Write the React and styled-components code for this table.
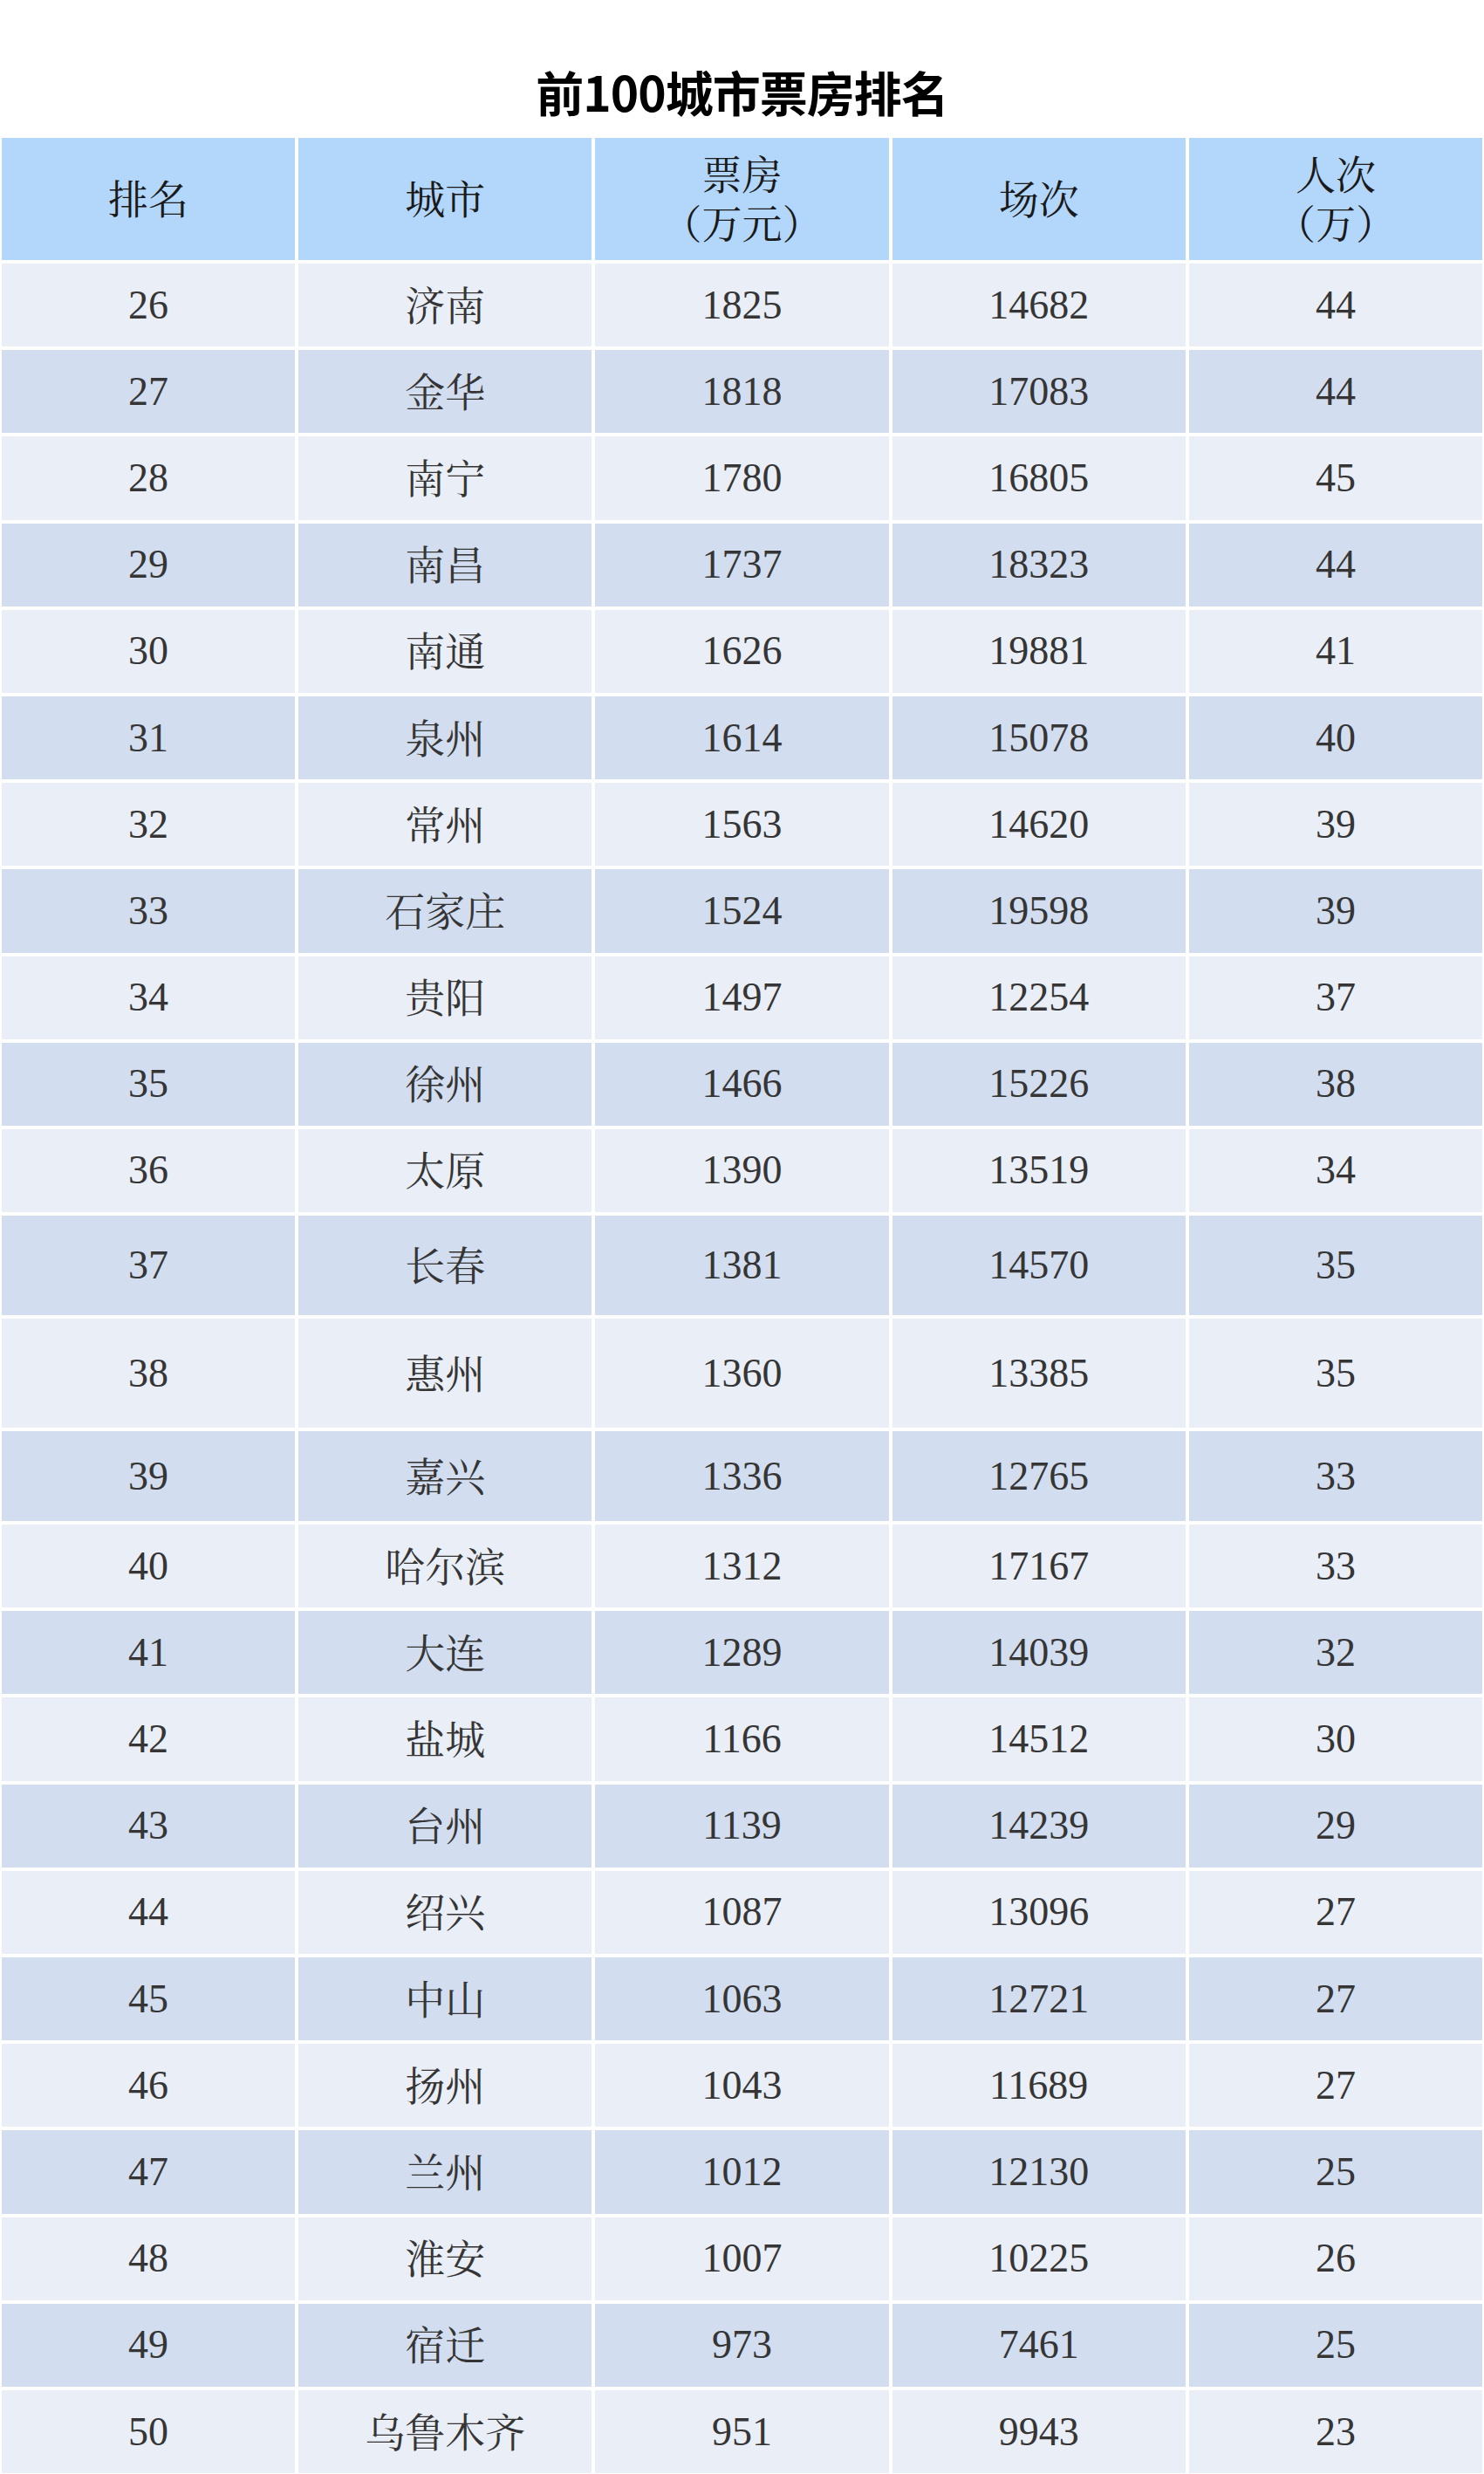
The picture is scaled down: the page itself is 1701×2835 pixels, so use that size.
import styled, { createGlobalStyle } from 'styled-components';

const GlobalStyle = createGlobalStyle`
  html, body {
    margin: 0;
    padding: 0;
    background: #ffffff;
  }
`;

const rows = [
  [26, '济南', 1825, 14682, 44],
  [27, '金华', 1818, 17083, 44],
  [28, '南宁', 1780, 16805, 45],
  [29, '南昌', 1737, 18323, 44],
  [30, '南通', 1626, 19881, 41],
  [31, '泉州', 1614, 15078, 40],
  [32, '常州', 1563, 14620, 39],
  [33, '石家庄', 1524, 19598, 39],
  [34, '贵阳', 1497, 12254, 37],
  [35, '徐州', 1466, 15226, 38],
  [36, '太原', 1390, 13519, 34],
  [37, '长春', 1381, 14570, 35, 114],
  [38, '惠州', 1360, 13385, 35, 125],
  [39, '嘉兴', 1336, 12765, 33, 103],
  [40, '哈尔滨', 1312, 17167, 33],
  [41, '大连', 1289, 14039, 32],
  [42, '盐城', 1166, 14512, 30],
  [43, '台州', 1139, 14239, 29],
  [44, '绍兴', 1087, 13096, 27],
  [45, '中山', 1063, 12721, 27],
  [46, '扬州', 1043, 11689, 27],
  [47, '兰州', 1012, 12130, 25],
  [48, '淮安', 1007, 10225, 26],
  [49, '宿迁', 973, 7461, 25],
  [50, '乌鲁木齐', 951, 9943, 23],
];

const Page = styled.div`
  width: 1701px;
  box-sizing: border-box;
  padding: 0 2px;
`;

const Title = styled.h1`
  margin: 0;
  padding-top: 77px;
  height: 81px;
  box-sizing: content-box;
  font-family: 'Noto Sans CJK SC', sans-serif;
  font-weight: 700;
  font-size: 55px;
  line-height: 1;
  text-align: center;
  color: #000000;
  letter-spacing: -1px;
`;

const Table = styled.div`
  display: flex;
  flex-direction: column;
  gap: 4px;
`;

const Row = styled.div`
  display: grid;
  grid-template-columns: repeat(5, 1fr);
  gap: 4px;
  height: ${(p) => p.$h}px;
`;

const Cell = styled.div`
  display: flex;
  align-items: center;
  justify-content: center;
  box-sizing: border-box;
  text-align: center;
  background: ${(p) => (p.$shade ? '#d2ddef' : '#e9eef7')};
  font-family: ${(p) =>
    p.$cjk
      ? "'Noto Serif CJK SC', 'Noto Sans CJK SC', serif"
      : "'Liberation Serif', 'Noto Serif CJK SC', 'Noto Sans CJK SC', serif"};
  padding-bottom: ${(p) => (p.$cjk ? '6px' : '0')};
  font-size: 46px;
  line-height: 1;
  color: #353535;
`;

const HeadCell = styled(Cell)`
  background: #b3d7fa;
  color: #1a1a1a;
  line-height: 56px;
`;

const headers = [
  ['排名'],
  ['城市'],
  ['票房', '（万元）'],
  ['场次'],
  ['人次', '（万）'],
];

function App() {
  return (
    <Page>
      <GlobalStyle />
      <Title>前100城市票房排名</Title>
      <Table>
        <Row $h={140}>
          {headers.map((lines) => (
            <HeadCell key={lines[0]} $cjk>
              <div>
                {lines.map((l) => (
                  <div key={l}>{l}</div>
                ))}
              </div>
            </HeadCell>
          ))}
        </Row>
        {rows.map(([rank, city, box, shows, people, h], i) => (
          <Row key={rank} $h={h || 95.2}>
            {[rank, city, box, shows, people].map((v, j) => (
              <Cell key={j} $shade={i % 2 === 1} $cjk={j === 1}>
                {v}
              </Cell>
            ))}
          </Row>
        ))}
      </Table>
    </Page>
  );
}

export default App;
